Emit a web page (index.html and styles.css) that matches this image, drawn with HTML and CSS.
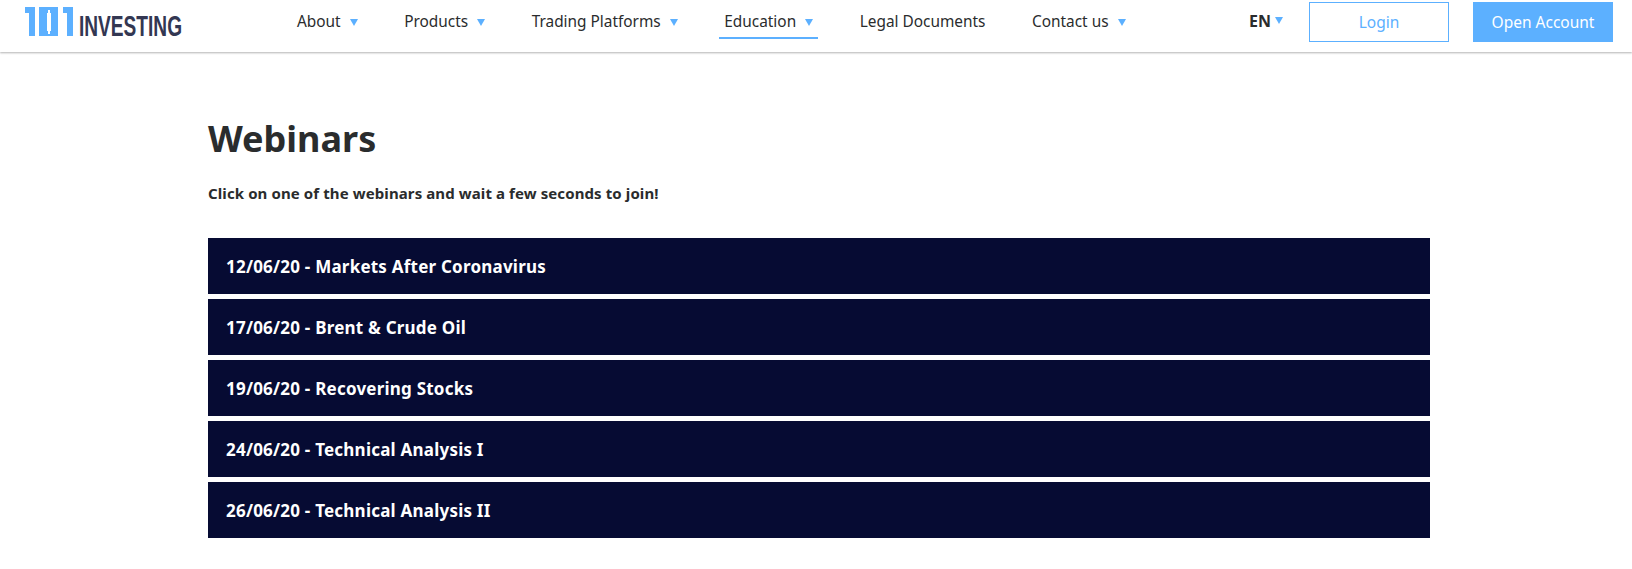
FILE: index.html
```html
<!DOCTYPE html>
<html lang="en">
<head>
<meta charset="utf-8">
<title>Webinars</title>
<link rel="stylesheet" href="styles.css">
</head>
<body>
<header class="topbar">
  <a class="logo" href="#">
    <svg class="logo-mark" width="230" height="32" viewBox="0 0 230 32">
      <path fill="#5cb0ff" d="M0 0H10V29H4V6H0Z"/>
      <path fill="#5cb0ff" fill-rule="evenodd" d="M14 0H33V29H14ZM23 3V6H22V24H23V27H25V24H26V6H25V3Z"/>
      <path fill="#5cb0ff" d="M38 0H48V29H42V6H38Z"/>
      <text class="logo-text" x="54" y="29" textLength="103" lengthAdjust="spacingAndGlyphs">INVESTING</text>
    </svg>
  </a>
  <nav class="nav">
    <a class="nav-item" href="#">About <i class="caret"></i></a>
    <a class="nav-item" href="#">Products <i class="caret"></i></a>
    <a class="nav-item" href="#">Trading Platforms <i class="caret"></i></a>
    <a class="nav-item active" href="#">Education <i class="caret"></i></a>
    <a class="nav-item" href="#">Legal Documents</a>
    <a class="nav-item" href="#">Contact us <i class="caret"></i></a>
  </nav>
  <div class="actions">
    <div class="lang">EN <i class="caret"></i></div>
    <a class="btn btn-login" href="#">Login</a>
    <a class="btn btn-open" href="#">Open Account</a>
  </div>
</header>
<main class="content">
  <h1 class="title">Webinars</h1>
  <p class="lead">Click on one of the webinars and wait a few seconds to join!</p>
  <ul class="list">
    <li class="row">12/06/20 - Markets After Coronavirus</li>
    <li class="row">17/06/20 - Brent &amp; Crude Oil</li>
    <li class="row">19/06/20 - Recovering Stocks</li>
    <li class="row">24/06/20 - Technical Analysis I</li>
    <li class="row">26/06/20 - Technical Analysis II</li>
  </ul>
</main>
</body>
</html>
```
FILE: styles.css
```css
* { box-sizing: border-box; }
html, body { margin: 0; padding: 0; background: #fff; }
body { font-family: "Noto Sans", "Open Sans", sans-serif; color: #2a2c2d; height: 569px; overflow: hidden; }
a { color: inherit; text-decoration: none; }
.topbar {
  height: 52px;
  display: flex;
  align-items: flex-start;
  box-shadow: 0 1px 2px rgba(0, 0, 0, 0.3);
  padding: 0 19px 0 25px;
}
.logo { display: block; width: 267px; padding-top: 7px; flex: none; }
.logo-mark { display: block; }
.logo-text {
  font-family: "Liberation Sans", sans-serif;
  font-size: 29px;
  font-weight: 700;
  fill: #333752;
}
.nav { display: flex; gap: 36.5px; flex: none; font-size: 15.4px; }
.nav-item {
  height: 39px;
  padding: 12px 5px 0;
  line-height: 20px;
  white-space: nowrap;
}
.nav-item .caret { margin-left: 5px; }
.active { border-bottom: 2px solid #5cb0ff; }
.caret {
  display: inline-block;
  width: 0; height: 0;
  border-left: 4px solid transparent;
  border-right: 4px solid transparent;
  border-top: 7px solid #5cb0ff;
  vertical-align: 1px;
}
.actions { display: flex; align-items: flex-start; margin-left: auto; }
.lang { width: 60px; margin-left: -1px; padding-top: 11px; font-size: 16px; font-weight: 700; line-height: 20px; white-space: nowrap; }
.lang .caret { vertical-align: 3px; margin-left: 0; }
.btn {
  display: flex; align-items: center; justify-content: center;
  width: 140px; height: 40px; margin-top: 2px;
  font-size: 15.5px;
}
.btn-login { border: 1px solid #5cb0ff; color: #5cb0ff; }
.btn-open { margin-left: 24px; background: #5cb0ff; color: #fff; }
.content { padding: 65px 0 0 208px; }
.title { margin: 0; font-size: 36px; line-height: 44px; font-weight: 700; }
.lead { margin: 22px 0 0; font-size: 15px; letter-spacing: 0.1px; line-height: 20px; font-weight: 700; }
.list { list-style: none; margin: 35px 0 0; padding: 0; display: flex; flex-direction: column; gap: 5px; width: 1222px; }
.row {
  height: 56px;
  background: #060b33;
  color: #fff;
  font-size: 17px;
  letter-spacing: 0.22px;
  font-weight: 700;
  line-height: 58px;
  padding-left: 18px;
}
```
